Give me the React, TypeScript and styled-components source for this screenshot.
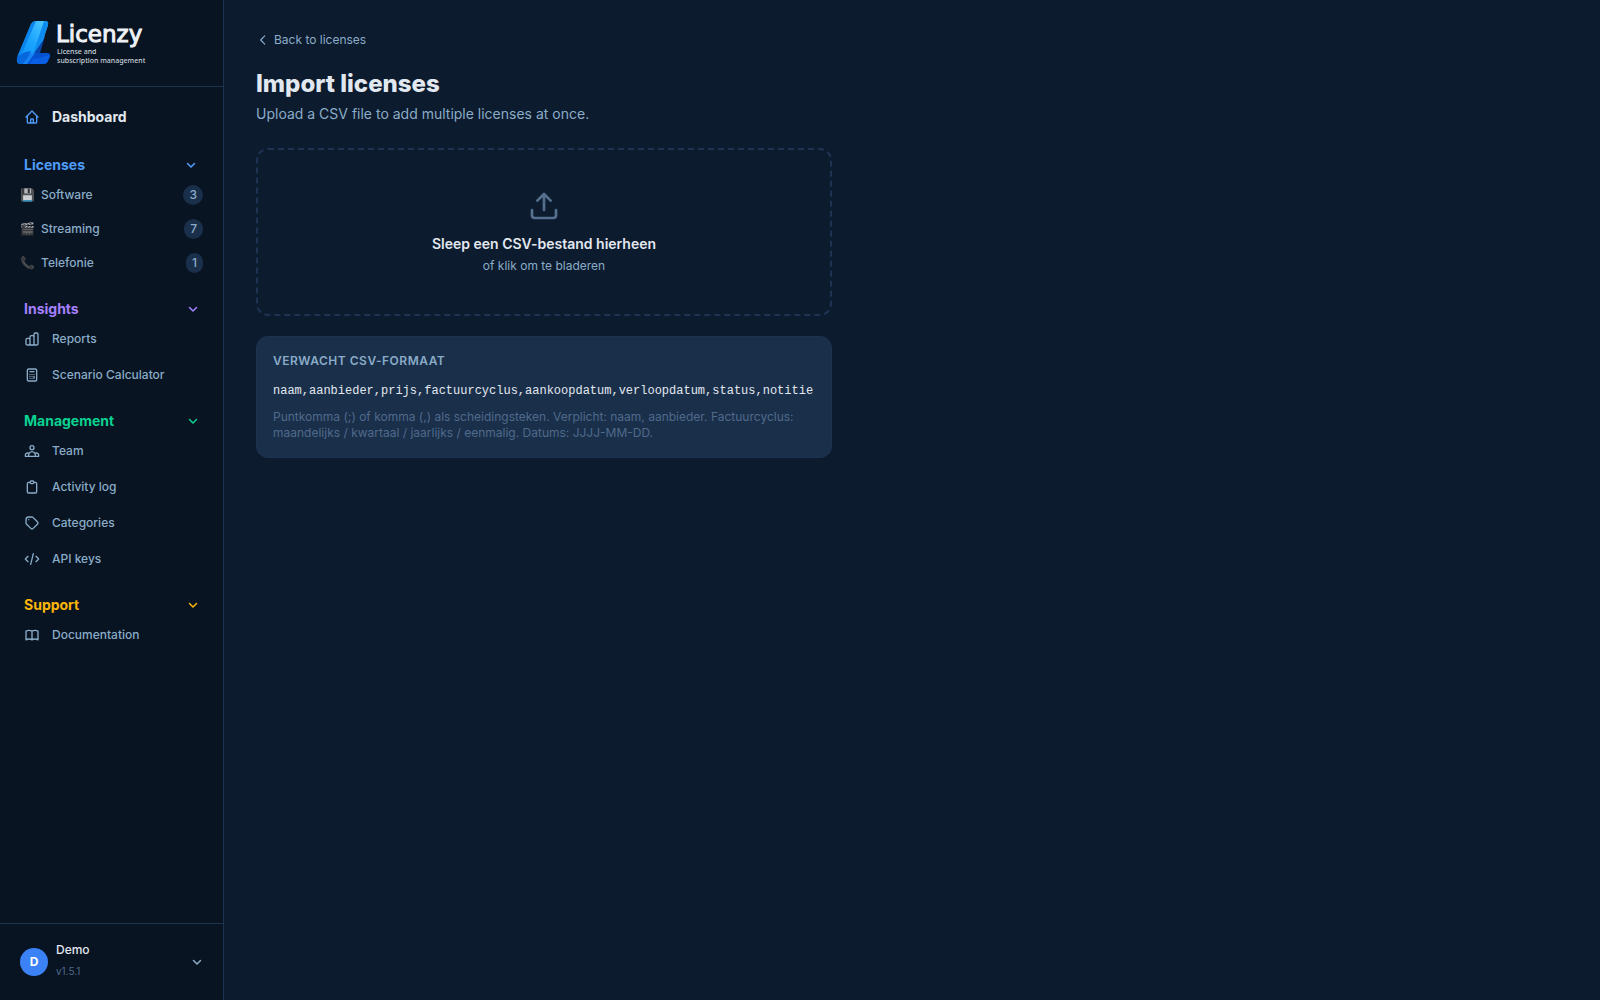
import React, { useState } from "react";
import styled, { createGlobalStyle } from "styled-components";

const color = {
  page: "#0d1b2e",
  side: "#081421",
  line: "#1e3352",
  card: "#1a2f4a",
  text: "#e2e8f0",
  soft: "#8aacc8",
  dim: "#4f6a8a",
};

const GlobalStyle = createGlobalStyle`
  *, *::before, *::after { box-sizing: border-box; }
  body {
    margin: 0;
    background: ${color.page};
    color: ${color.text};
    font-family: Inter, "Liberation Sans", sans-serif;
    font-size: 14px;
    line-height: 20px;
  }
  h1, p { margin: 0; }
  a { color: inherit; text-decoration: none; }
  button { font: inherit; color: inherit; background: none; border: 0; padding: 0; cursor: pointer; }
`;

const Shell = styled.div`
  display: flex;
  min-height: 100vh;
`;

const Sidebar = styled.aside`
  display: flex;
  flex-direction: column;
  flex: 0 0 224px;
  background: ${color.side};
  border-right: 1px solid ${color.line};
`;

const Brand = styled.a`
  display: flex;
  gap: 5px;
  padding: 20px 16px;
  border-bottom: 1px solid ${color.line};
  color: #eef2f6;
  font-family: "Noto Sans", sans-serif;
`;

const BrandText = styled.span`
  display: flex;
  flex-direction: column;
  padding-top: 2px;
`;

const BrandName = styled.span`
  font-family: "DejaVu Sans", sans-serif;
  font-size: 23px;
  line-height: 25px;
  -webkit-text-stroke: 1px currentColor;
`;

const BrandTag = styled.span`
  padding-left: 1px;
  color: #c9d2dc;
  font-size: 7px;
  font-weight: 500;
  line-height: 9px;
  white-space: nowrap;
`;

const Nav = styled.nav`
  display: flex;
  flex: 1;
  flex-direction: column;
  padding: 12px;
`;

const NavLink = styled.a<{ $main?: boolean }>`
  display: flex;
  align-items: center;
  gap: 12px;
  height: 36px;
  padding: 0 12px;
  margin-bottom: ${(p) => (p.$main ? "2px" : "0")};
  color: ${(p) => (p.$main ? color.text : color.soft)};
  font-size: ${(p) => (p.$main ? "14px" : "12px")};
  font-weight: ${(p) => (p.$main ? 700 : 500)};

  svg { color: ${(p) => (p.$main ? "#4f9cf9" : color.soft)}; }
`;

const Section = styled.section`
  margin-top: 14px;
`;

const SectionToggle = styled.button<{ $tone: string; $inset: number }>`
  display: flex;
  align-items: center;
  justify-content: space-between;
  width: 100%;
  height: 28px;
  padding: 0 ${(p) => p.$inset}px 0 12px;
  margin-bottom: -2px;
  color: ${(p) => p.$tone};
  font-weight: 700;
`;

const CategoryList = styled.div`
  display: flex;
  flex-direction: column;
  gap: 2px;
  padding: 2px 0;
`;

const Category = styled.a`
  display: flex;
  align-items: center;
  gap: 6px;
  height: 32px;
  padding: 0 8px;
  color: ${color.soft};
  font-size: 12px;
  font-weight: 500;
`;

const Emoji = styled.span`
  width: 15px;
  font-size: 12px;
  opacity: 0.8;
`;

const Count = styled.span`
  margin-left: auto;
  padding: 0 6px;
  border-radius: 10px;
  background: ${color.card};
`;

const UserButton = styled.button`
  display: flex;
  align-items: center;
  gap: 8px;
  height: 77px;
  padding: 0 20px;
  border-top: 1px solid ${color.line};
  text-align: left;
  color: ${color.soft};
`;

const Avatar = styled.span`
  display: grid;
  place-items: center;
  width: 28px;
  height: 28px;
  border-radius: 50%;
  background: #3b82f6;
  color: #fff;
  font-size: 12px;
  font-weight: 700;
`;

const UserText = styled.span`
  display: flex;
  flex: 1;
  flex-direction: column;
  gap: 1px;
  padding-bottom: 3px;
`;

const UserName = styled.span`
  color: ${color.text};
  font-size: 12px;
  font-weight: 500;
`;

const Version = styled.span`
  color: ${color.dim};
  font-size: 10px;
`;

const Main = styled.main`
  flex: 1;
  min-width: 0;
  padding: 32px;
`;

const Content = styled.div`
  max-width: 576px;
`;

const Back = styled.a`
  display: inline-flex;
  align-items: center;
  gap: 4px;
  height: 16px;
  color: ${color.soft};
  font-size: 12px;
`;

const Title = styled.h1`
  margin-top: 16px;
  font-size: 24px;
  font-weight: 800;
  line-height: 32px;
`;

const Subtitle = styled.p`
  margin: 4px 0 24px;
  color: ${color.soft};
`;

const DropZone = styled.label`
  display: flex;
  flex-direction: column;
  align-items: center;
  padding: 40px;
  border: 2px dashed ${color.line};
  border-radius: 12px;
  cursor: pointer;

  svg { color: #55708f; margin-bottom: 12px; }
`;

const FileInput = styled.input`
  display: none;
`;

const DropTitle = styled.span`
  font-weight: 600;
`;

const DropHint = styled.span`
  margin-top: 4px;
  color: ${color.soft};
  font-size: 12px;
  line-height: 16px;
`;

const FormatCard = styled.section`
  margin-top: 20px;
  padding: 16px;
  border: 1px solid ${color.line};
  border-radius: 12px;
  background: ${color.card};
  font-size: 12px;
  line-height: 16px;
`;

const FormatLabel = styled.p`
  color: ${color.soft};
  font-weight: 600;
  letter-spacing: 0.5px;
  text-transform: uppercase;
`;

const FormatCode = styled.code`
  display: block;
  margin: 14px 0 10px;
  font-family: "Liberation Mono", monospace;
  font-size: 12px;
  overflow-wrap: anywhere;
`;

const FormatNote = styled.p`
  color: ${color.dim};
`;

const paths = {
  home: "M3 12l2-2m0 0l7-7 7 7M5 10v10a1 1 0 001 1h3m10-11l2 2m-2-2v10a1 1 0 01-1 1h-3m-6 0a1 1 0 001-1v-4a1 1 0 011-1h2a1 1 0 011 1v4a1 1 0 001 1m-6 0h6",
  chart: "M9 19v-6a2 2 0 00-2-2H5a2 2 0 00-2 2v6a2 2 0 002 2h2a2 2 0 002-2zm0 0V9a2 2 0 012-2h2a2 2 0 012 2v10m-6 0a2 2 0 002 2h2a2 2 0 002-2m0 0V5a2 2 0 012-2h2a2 2 0 012 2v14a2 2 0 01-2 2h-2a2 2 0 01-2-2z",
  calculator: "M9 7h6m0 10v-3m-3 3h.01M9 17h.01M9 14h.01M12 14h.01M15 11h.01M12 11h.01M9 11h.01M7 21h10a2 2 0 002-2V5a2 2 0 00-2-2H7a2 2 0 00-2 2v14a2 2 0 002 2z",
  team: "M17 20h5v-2a3 3 0 00-5.356-1.857M17 20H7m10 0v-2c0-.656-.126-1.283-.356-1.857M7 20H2v-2a3 3 0 015.356-1.857M7 20v-2c0-.656.126-1.283.356-1.857m0 0a5.002 5.002 0 019.288 0M15 7a3 3 0 11-6 0 3 3 0 016 0z",
  clipboard: "M9 5H7a2 2 0 00-2 2v12a2 2 0 002 2h10a2 2 0 002-2V7a2 2 0 00-2-2h-2M9 5a2 2 0 002 2h2a2 2 0 002-2M9 5a2 2 0 012-2h2a2 2 0 012 2",
  tag: "M7 7h.01M7 3h5c.512 0 1.024.195 1.414.586l7 7a2 2 0 010 2.828l-7 7a2 2 0 01-2.828 0l-7-7A1.994 1.994 0 013 12V7a4 4 0 014-4z",
  code: "M10 20l4-16m4 4l4 4-4 4M6 16l-4-4 4-4",
  book: "M12 6.253v13m0-13C10.832 5.477 9.246 5 7.5 5S4.168 5.477 3 6.253v13C4.168 18.477 5.754 18 7.5 18s3.332.477 4.5 1.253m0-13C13.168 5.477 14.754 5 16.5 5c1.747 0 3.332.477 4.5 1.253v13C19.832 18.477 18.247 18 16.5 18c-1.746 0-3.332.477-4.5 1.253",
  down: "M19 9l-7 7-7-7",
  left: "M15 19l-7-7 7-7",
  upload: "M21 15v4a2 2 0 01-2 2H5a2 2 0 01-2-2v-4M17 8l-5-5-5 5M12 3v12",
};

type IconName = keyof typeof paths;

function Icon({ name, size = 16, weight = 2 }: { name: IconName; size?: number; weight?: number }) {
  return (
    <svg width={size} height={size} viewBox="0 0 24 24" fill="none" stroke="currentColor" strokeWidth={weight} strokeLinecap="round" strokeLinejoin="round" aria-hidden="true">
      <path d={paths[name]} />
    </svg>
  );
}

function Logo() {
  return (
    <svg width="35" height="46" viewBox="0 0 35 46" aria-hidden="true">
      <defs>
        <linearGradient id="stem" x1="0" y1="1" x2="1" y2="0">
          <stop offset="0" stopColor="#0a8cf5" />
          <stop offset="0.5" stopColor="#1ba4ff" />
          <stop offset="1" stopColor="#55cdff" />
        </linearGradient>
        <linearGradient id="foot" x1="0" y1="0" x2="1" y2="1">
          <stop offset="0" stopColor="#0a50c8" />
          <stop offset="1" stopColor="#0052dc" />
        </linearGradient>
      </defs>
      <path d="M27 14L29 16 24 33H14z" fill="#0747ae" />
      <path d="M14 33H31q4 0 3 4l-2 4q-1 3-5 3H6z" fill="url(#foot)" />
      <path d="M15 4q2-3 5-3h9q4 0 3 4L27 20 18 33 11 44H5q-5 0-4-5z" fill="url(#stem)" />
      <path d="M15 4q2-3 5-3L7 31 1 37z" fill="#0a84ec" />
      <path d="M28 1q5 0 4 4L27 19 17 34z" fill="#0c8bf0" />
      <path d="M1 37q5-5 14-6L10 44H5q-5 0-4-7z" fill="#0768de" />
      <path d="M15 33l4 0-8 11H7z" fill="#1683f5" />
      <path d="M17 39q9-1 16-4l-1 6q-1 3-5 3H13z" fill="#0a5fe4" />
    </svg>
  );
}

type Group = { title: string; tone: string; items: { icon: IconName; label: string }[] };

const categories = [
  { emoji: "💾", label: "Software", count: 3 },
  { emoji: "🎬", label: "Streaming", count: 7 },
  { emoji: "📞", label: "Telefonie", count: 1 },
];

const groups: Group[] = [
  { title: "Insights", tone: "#a580ff", items: [
    { icon: "chart", label: "Reports" },
    { icon: "calculator", label: "Scenario Calculator" },
  ] },
  { title: "Management", tone: "#0bd292", items: [
    { icon: "team", label: "Team" },
    { icon: "clipboard", label: "Activity log" },
    { icon: "tag", label: "Categories" },
    { icon: "code", label: "API keys" },
  ] },
  { title: "Support", tone: "#fdb50a", items: [{ icon: "book", label: "Documentation" }] },
];

function NavSection({ title, tone, inset = 12, children }: { title: string; tone: string; inset?: number; children: React.ReactNode }) {
  const [open, setOpen] = useState(true);
  return (
    <Section>
      <SectionToggle type="button" $tone={tone} $inset={inset} aria-expanded={open} onClick={() => setOpen(!open)}>
        {title}
        <Icon name="down" size={12} weight={3} />
      </SectionToggle>
      {open && children}
    </Section>
  );
}

export default function App() {
  return (
    <>
      <GlobalStyle />
      <Shell>
        <Sidebar>
          <Brand href="#">
            <Logo />
            <BrandText>
              <BrandName>Licenzy</BrandName>
              <BrandTag>License and</BrandTag>
              <BrandTag>subscription management</BrandTag>
            </BrandText>
          </Brand>
          <Nav>
            <NavLink href="#" $main>
              <Icon name="home" />
              Dashboard
            </NavLink>
            <NavSection title="Licenses" tone="#4f9cf9" inset={14}>
              <CategoryList>
                {categories.map((c) => (
                  <Category href="#" key={c.label}>
                    <Emoji>{c.emoji}</Emoji>
                    {c.label}
                    <Count>{c.count}</Count>
                  </Category>
                ))}
              </CategoryList>
            </NavSection>
            {groups.map((g) => (
              <NavSection title={g.title} tone={g.tone} key={g.title}>
                {g.items.map((item) => (
                  <NavLink href="#" key={item.label}>
                    <Icon name={item.icon} />
                    {item.label}
                  </NavLink>
                ))}
              </NavSection>
            ))}
          </Nav>
          <UserButton type="button">
            <Avatar>D</Avatar>
            <UserText>
              <UserName>Demo</UserName>
              <Version>v1.5.1</Version>
            </UserText>
            <Icon name="down" size={12} weight={3} />
          </UserButton>
        </Sidebar>
        <Main>
          <Content>
            <Back href="#">
              <Icon name="left" size={14} />
              Back to licenses
            </Back>
            <Title>Import licenses</Title>
            <Subtitle>Upload a CSV file to add multiple licenses at once.</Subtitle>
            <DropZone>
              <FileInput type="file" accept=".csv" />
              <Icon name="upload" size={32} />
              <DropTitle>Sleep een CSV-bestand hierheen</DropTitle>
              <DropHint>of klik om te bladeren</DropHint>
            </DropZone>
            <FormatCard>
              <FormatLabel>Verwacht CSV-formaat</FormatLabel>
              <FormatCode>naam,aanbieder,prijs,factuurcyclus,aankoopdatum,verloopdatum,status,notitie</FormatCode>
              <FormatNote>
                Puntkomma (;) of komma (,) als scheidingsteken. Verplicht: naam, aanbieder. Factuurcyclus: maandelijks / kwartaal / jaarlijks / eenmalig. Datums: JJJJ-MM-DD.
              </FormatNote>
            </FormatCard>
          </Content>
        </Main>
      </Shell>
    </>
  );
}
